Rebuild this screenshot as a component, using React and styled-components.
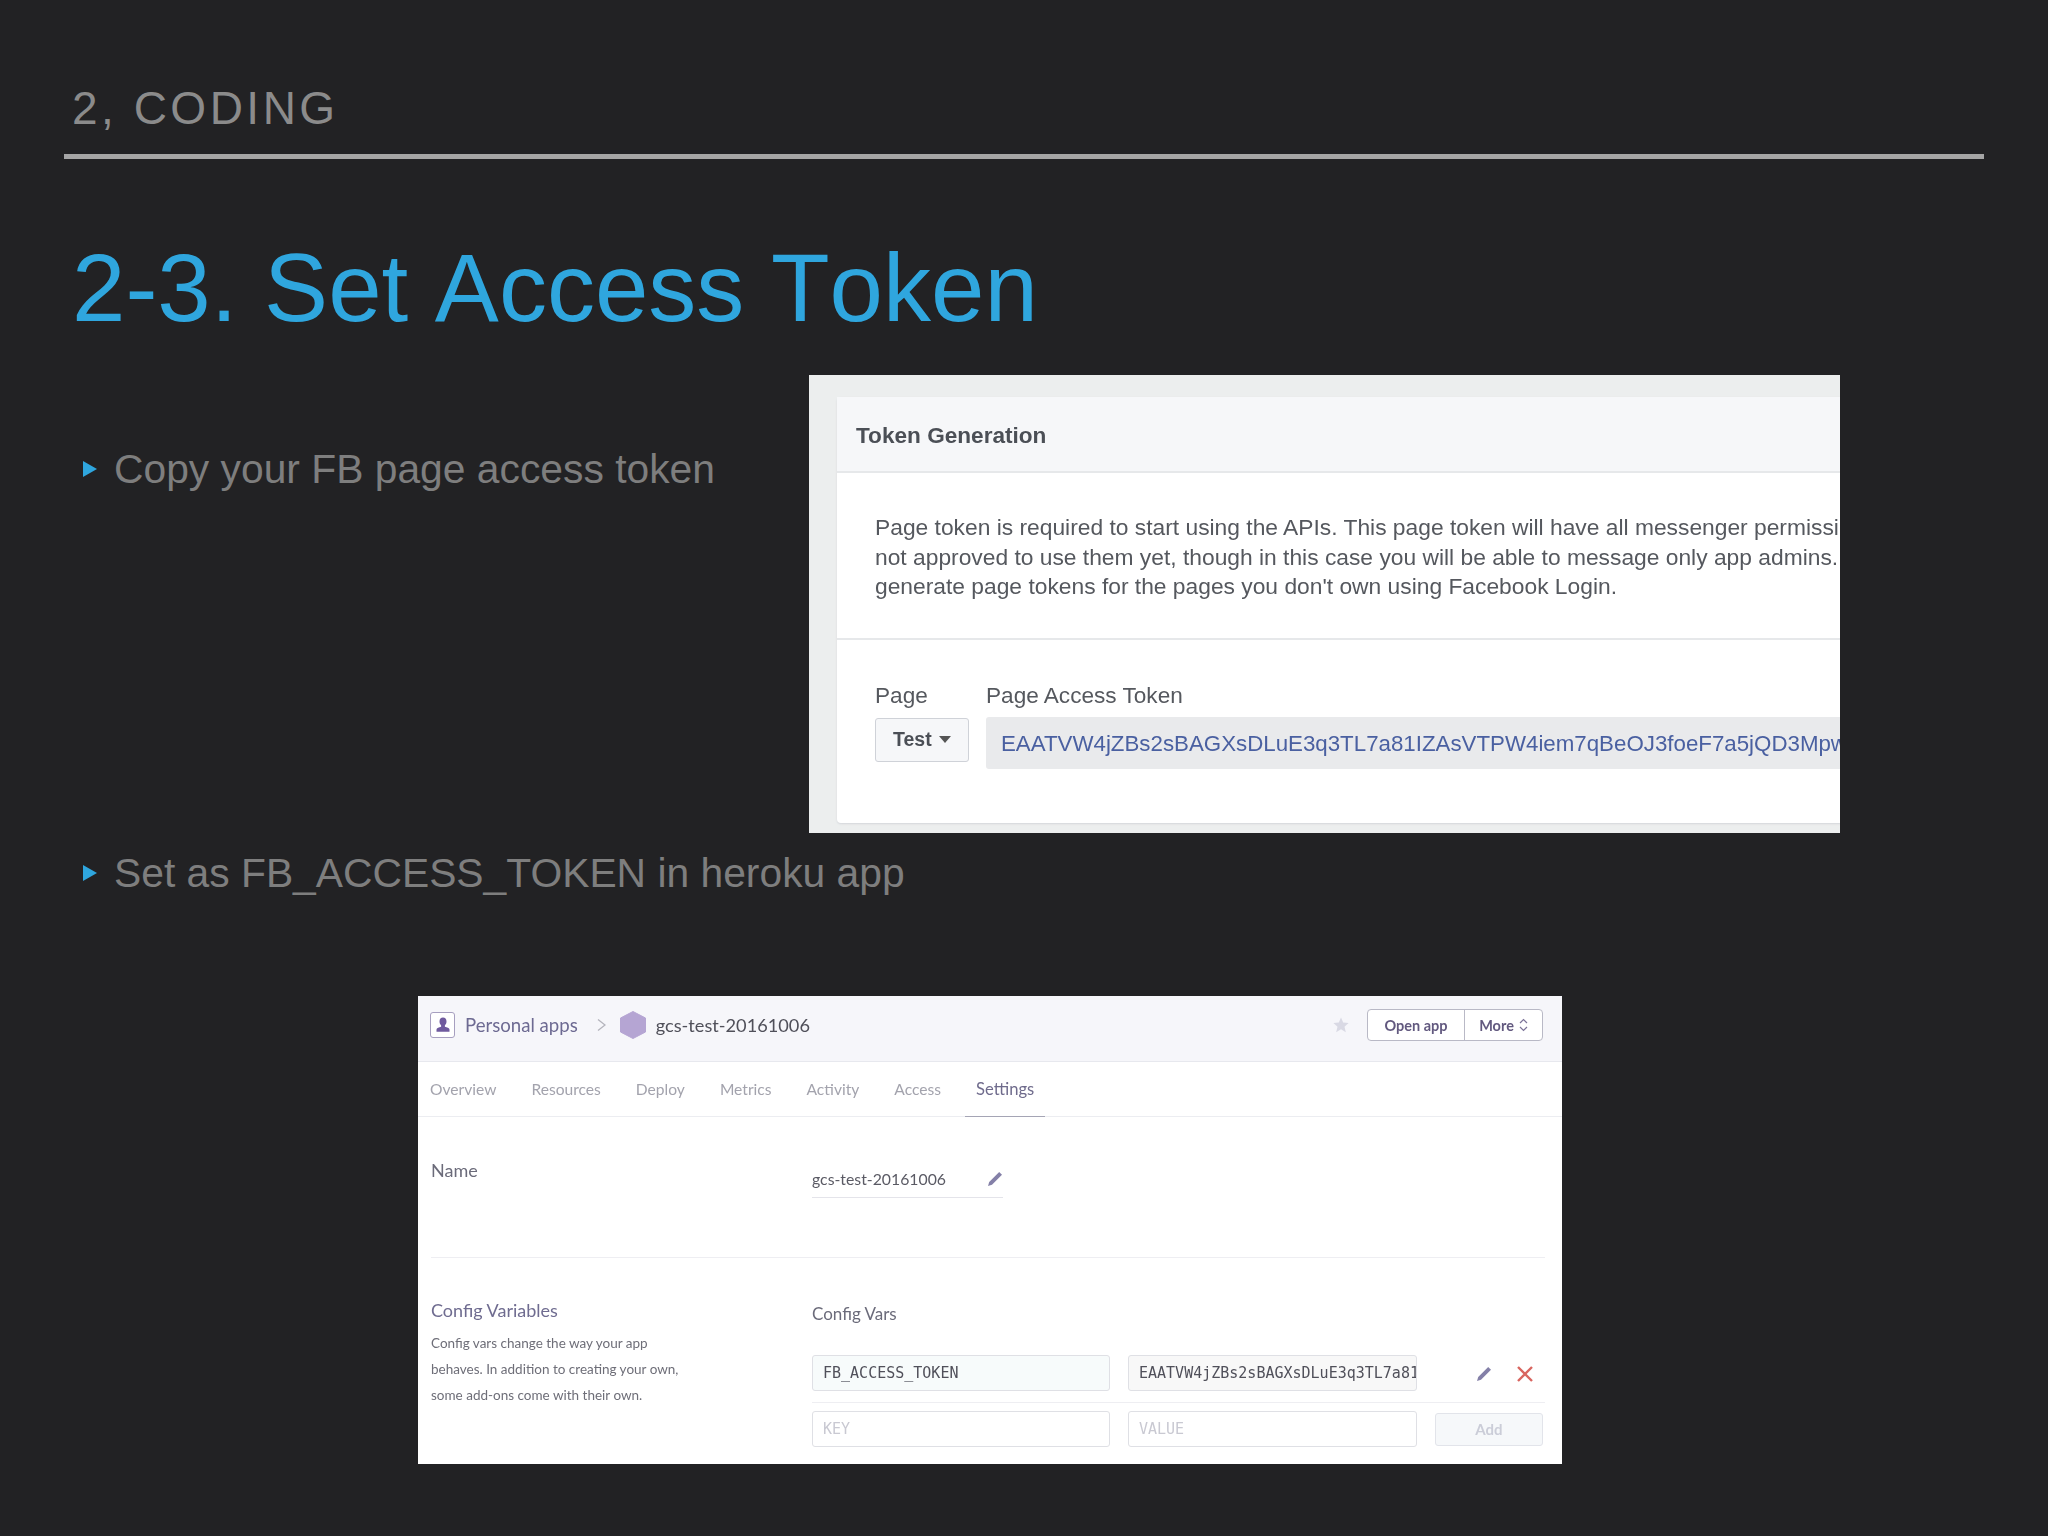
import React from 'react'
import styled, { createGlobalStyle } from 'styled-components'

const GlobalStyle = createGlobalStyle`
  html, body {
    margin: 0;
    padding: 0;
    background: #222224;
  }
  * { box-sizing: border-box; }
`

const PencilIcon = ({ size = 16 }) => (
  <svg width={size} height={size} viewBox="0 0 16 16">
    <path d="M12.200 1 15 3.800 5 13.800 1 15 2.200 11Z" fill="#8480a8" />
  </svg>
)

const UserIcon = () => (
  <svg width="16" height="16" viewBox="0 0 16 16">
    <path d="M8 .5c2.200 0 3.500 1.700 3.500 3.900 0 1.600-.7 3-1.600 3.800v1.500c2 .5 4.600 1.300 4.600 2.800v2.200h-13v-2.200c0-1.500 2.600-2.300 4.600-2.800V8.200c-.9-.8-1.600-2.200-1.600-3.800C4.500 2.200 5.800.5 8 .5Z" fill="#6f5a9e" />
  </svg>
)

const HexIcon = () => (
  <svg width="26" height="28" viewBox="0 0 26 28">
    <path d="M13 .5 25.500 7v14L13 27.500.5 21V7Z" fill="#b5a5d3" stroke="#b5a5d3" strokeLinejoin="round" />
  </svg>
)

const ChevronIcon = () => (
  <svg width="9" height="14" viewBox="0 0 9 14">
    <path d="M1 1.500 8 7l-7 5.500" fill="none" stroke="#b4b4bc" strokeWidth="1.300" />
  </svg>
)

const StarIcon = () => (
  <svg width="16" height="16" viewBox="0 0 16 16">
    <path d="M8 .5 10.200 5.600 15.600 6.100 11.500 9.700 12.800 15.200 8 12.300 3.200 15.200 4.500 9.700.4 6.100 5.800 5.600Z" fill="#d9d9e4" />
  </svg>
)

const UpDownIcon = () => (
  <svg width="9" height="14" viewBox="0 0 9 14">
    <path d="M1 5 4.500 1.500 8 5M1 9l3.500 3.500L8 9" fill="none" stroke="#7b7397" strokeWidth="1.200" />
  </svg>
)

const RemoveIcon = () => (
  <svg width="16" height="16" viewBox="0 0 16 16">
    <path d="M1 1l14 14M15 1 1 15" stroke="#d9655f" strokeWidth="2.400" />
  </svg>
)

const tabs = ['Overview', 'Resources', 'Deploy', 'Metrics', 'Activity', 'Access', 'Settings']

const App = () => {
  return (
    <Slide>
      <GlobalStyle />
      <Kicker>2, CODING</Kicker>
      <Rule />
      <Title>2-3. Set Access Token</Title>

      <TopRow>
        <BulletColumn>
          <Bullet $top={74}>
            <Arrow />
            <span>Copy your FB page access token</span>
          </Bullet>
        </BulletColumn>
        <TokenShot>
          <TokenCard>
            <CardHead>Token Generation</CardHead>
            <CardText>
              <TextLine>Page token is required to start using the APIs. This page token will have all messenger permissio</TextLine>
              <TextLine>not approved to use them yet, though in this case you will be able to message only app admins.</TextLine>
              <TextLine>generate page tokens for the pages you don't own using Facebook Login.</TextLine>
            </CardText>
            <TokenForm>
              <Field>
                <FieldLabel>Page</FieldLabel>
                <PageSelect>Test<Caret /></PageSelect>
              </Field>
              <Field>
                <FieldLabel>Page Access Token</FieldLabel>
                <TokenInput>EAATVW4jZBs2sBAGXsDLuE3q3TL7a81IZAsVTPW4iem7qBeOJ3foeF7a5jQD3Mpw</TokenInput>
              </Field>
            </TokenForm>
          </TokenCard>
        </TokenShot>
      </TopRow>

      <Bullet $top={20}>
        <Arrow />
        <span>Set as FB_ACCESS_TOKEN in heroku app</span>
      </Bullet>

      <HerokuShot>
        <AppBar>
          <Avatar><UserIcon /></Avatar>
          <Crumb>Personal apps</Crumb>
          <CrumbSep><ChevronIcon /></CrumbSep>
          <HexIcon />
          <AppName>gcs-test-20161006</AppName>
          <BarRight>
            <StarIcon />
            <ButtonGroup>
              <GroupButton $width={96}>Open app</GroupButton>
              <GroupButton $width={78}>More <UpDownIcon /></GroupButton>
            </ButtonGroup>
          </BarRight>
        </AppBar>
        <TabBar>
          {tabs.map(tab => (
            <Tab key={tab} $active={tab === 'Settings'}>{tab}</Tab>
          ))}
        </TabBar>

        <Section $height={141}>
          <SectionTitle $dark>Name</SectionTitle>
          <NameField>
            <span>gcs-test-20161006</span>
            <PencilIcon />
          </NameField>
        </Section>

        <Section>
          <div>
            <SectionTitle>Config Variables</SectionTitle>
            <SectionText>
              Config vars change the way your app<br />
              behaves. In addition to creating your own,<br />
              some add-ons come with their own.
            </SectionText>
          </div>
          <div>
            <VarsTitle>Config Vars</VarsTitle>
            <VarRow $border>
              <VarInput $width={298} $tint="#f7fbfb">FB_ACCESS_TOKEN</VarInput>
              <VarInput $width={289} $tint="#f8f8f8">EAATVW4jZBs2sBAGXsDLuE3q3TL7a81</VarInput>
              <VarActions>
                <PencilIcon />
                <RemoveIcon />
              </VarActions>
            </VarRow>
            <VarRow>
              <VarInput $width={298} $empty>KEY</VarInput>
              <VarInput $width={289} $empty>VALUE</VarInput>
              <AddButton>Add</AddButton>
            </VarRow>
          </div>
        </Section>
      </HerokuShot>
    </Slide>
  )
}

export default App

const Slide = styled.div`
  width: 2048px;
  height: 1536px;
  overflow: hidden;
  background: #222224;
  font-family: "Liberation Sans", Arial, sans-serif;
  padding-top: 85px;
`

const Kicker = styled.div`
  padding-left: 72px;
  font-size: 46px;
  line-height: 46px;
  letter-spacing: 3.5px;
  color: #8b8b8b;
`

const Rule = styled.div`
  height: 5px;
  margin: 23px 64px 0;
  background: #a5a5a5;
`

const Title = styled.h1`
  margin: 81px 0 0;
  padding-left: 72px;
  font-size: 96px;
  line-height: 96px;
  font-weight: 400;
  font-kerning: none;
  color: #2fa6de;
`

const TopRow = styled.div`
  display: flex;
  margin-top: 39px;
`

const BulletColumn = styled.div`
  flex: none;
  width: 809px;
`

const Bullet = styled.div`
  display: flex;
  align-items: flex-start;
  gap: 17px;
  padding-left: 83px;
  margin-top: ${p => p.$top}px;
  font-size: 40.8px;
  line-height: 41px;
  color: #7e7e7e;
  white-space: nowrap;
`

const Arrow = styled.i`
  flex: none;
  width: 0;
  height: 0;
  margin-top: 12px;
  border-left: 14px solid #2fa6de;
  border-top: 8px solid transparent;
  border-bottom: 8px solid transparent;
`

const TokenShot = styled.div`
  flex: none;
  width: 1031px;
  height: 458px;
  padding: 22px 0 10px 28px;
  background: #eceeee;
  overflow: hidden;
  filter: blur(0.7px);
`

const TokenCard = styled.div`
  width: 1100px;
  height: 100%;
  background: #fff;
  border-radius: 4px 0 0 4px;
  box-shadow: 0 1px 2px #d4d6da;
  color: #55585e;
`

const CardHead = styled.div`
  height: 76px;
  padding-left: 19px;
  background: #f6f7f9;
  border-bottom: 2px solid #e6e8ea;
  font-size: 22.6px;
  line-height: 77px;
  font-weight: 700;
  color: #4b4f56;
`

const CardText = styled.div`
  padding: 40px 0 36px 38px;
  border-bottom: 2px solid #e6e8ea;
`

const TextLine = styled.div`
  font-size: 22.8px;
  line-height: 29.5px;
  white-space: nowrap;
`

const TokenForm = styled.div`
  display: flex;
  gap: 17px;
  padding: 40px 0 0 38px;
`

const Field = styled.div`
  display: flex;
  flex-direction: column;
  gap: 7px;
`

const FieldLabel = styled.div`
  font-size: 22.6px;
  line-height: 31px;
`

const PageSelect = styled.div`
  display: flex;
  align-items: center;
  gap: 7px;
  width: 94px;
  height: 44px;
  padding-left: 17px;
  background: #f6f7f9;
  border: 1px solid #cfd2d8;
  border-radius: 3px;
  font-size: 19.5px;
  font-weight: 700;
  color: #4b4f56;
`

const Caret = styled.i`
  width: 0;
  height: 0;
  border-top: 7px solid #555;
  border-left: 6px solid transparent;
  border-right: 6px solid transparent;
`

const TokenInput = styled.div`
  width: 900px;
  height: 52px;
  margin-top: -1px;
  padding-left: 15px;
  background: #e9eaec;
  border-radius: 3px;
  font-size: 22.3px;
  line-height: 54px;
  color: #4a60a1;
  white-space: nowrap;
  overflow: hidden;
`

const HerokuShot = styled.div`
  width: 1144px;
  height: 468px;
  margin: 102px 0 0 418px;
  background: #fff;
  overflow: hidden;
  font-family: Lato, "Open Sans", sans-serif;
  filter: blur(0.6px);
`

const AppBar = styled.div`
  display: flex;
  align-items: center;
  height: 66px;
  padding: 0 19px 7px 12px;
  background: #f6f6fa;
  border-bottom: 1px solid #e7e8ee;
`

const Avatar = styled.div`
  display: flex;
  align-items: center;
  justify-content: center;
  width: 25px;
  height: 26px;
  background: #fff;
  border: 1px solid #a79fc0;
  border-radius: 3px;
`

const Crumb = styled.div`
  margin-left: 10px;
  font-size: 18.6px;
  color: #6d6a92;
`

const CrumbSep = styled.div`
  display: flex;
  margin: 0 14px 0 19px;
`

const AppName = styled.div`
  margin-left: 10px;
  font-size: 18.2px;
  color: #50505a;
`

const BarRight = styled.div`
  display: flex;
  align-items: center;
  gap: 18px;
  margin-left: auto;
`

const ButtonGroup = styled.div`
  display: flex;
  height: 32px;
  background: #fff;
  border: 1px solid #b9b9c6;
  border-radius: 4px;
`

const GroupButton = styled.div`
  display: flex;
  align-items: center;
  justify-content: center;
  gap: 5px;
  width: ${p => p.$width}px;
  font-size: 14.5px;
  font-weight: 700;
  color: #62597f;

  & + & {
    border-left: 1px solid #b9b9c6;
  }
`

const TabBar = styled.div`
  display: flex;
  gap: 13px;
  height: 55px;
  padding-left: 1px;
  border-bottom: 1px solid #ecedf1;
`

const Tab = styled.div`
  height: 55px;
  padding: 0 11px;
  font-size: ${p => (p.$active ? '16.6px' : '15.6px')};
  line-height: 54px;
  color: ${p => (p.$active ? '#6f6b8c' : '#a3a3ad')};
  border-bottom: 1px solid ${p => (p.$active ? '#a5a5b5' : 'transparent')};
`

const Section = styled.div`
  display: grid;
  grid-template-columns: 381px 1fr;
  align-content: start;
  height: ${p => (p.$height ? `${p.$height}px` : 'auto')};
  margin: 0 17px 0 13px;
  padding-top: ${p => (p.$height ? '41px' : '40px')};
  border-bottom: ${p => (p.$height ? '1px solid #eeeef2' : 'none')};
`

const SectionTitle = styled.div`
  font-size: 18px;
  line-height: 24px;
  color: ${p => (p.$dark ? '#6b6b7a' : '#6f6c90')};
`

const NameField = styled.div`
  display: flex;
  justify-content: space-between;
  align-items: center;
  width: 191px;
  margin-top: 9px;
  padding-bottom: 6px;
  border-bottom: 1px solid #e4e4ea;
  font-size: 15.8px;
  line-height: 24px;
  color: #5a5a64;
`

const SectionText = styled.div`
  margin-top: 8px;
  font-size: 13.5px;
  line-height: 26px;
  color: #6e6e78;
`

const VarsTitle = styled.div`
  margin: 4px 0 29px;
  font-size: 17px;
  line-height: 24px;
  color: #6b6b7a;
`

const VarRow = styled.div`
  display: flex;
  align-items: flex-start;
  gap: 18px;
  padding: ${p => (p.$border ? '0 0 11px' : '8px 0 0')};
  border-bottom: ${p => (p.$border ? '1px solid #eeeef2' : 'none')};
`

const VarInput = styled.div`
  width: ${p => p.$width}px;
  height: 36px;
  padding-left: 10px;
  background: ${p => p.$tint || '#fff'};
  border: 1px solid #dfe0e5;
  border-radius: 3px;
  font-family: "DejaVu Sans Mono", monospace;
  font-size: 15px;
  line-height: 34px;
  color: ${p => (p.$empty ? '#c9c9d2' : '#50505a')};
  white-space: nowrap;
  overflow: hidden;
`

const VarActions = styled.div`
  display: flex;
  gap: 25px;
  margin: 11px 0 0 41px;
`

const AddButton = styled.div`
  width: 108px;
  height: 33px;
  margin-top: 2px;
  background: #f6f8fa;
  border: 1px solid #e2e4ea;
  border-radius: 3px;
  text-align: center;
  font-size: 15px;
  font-weight: 700;
  line-height: 31px;
  color: #cbcdd8;
`
